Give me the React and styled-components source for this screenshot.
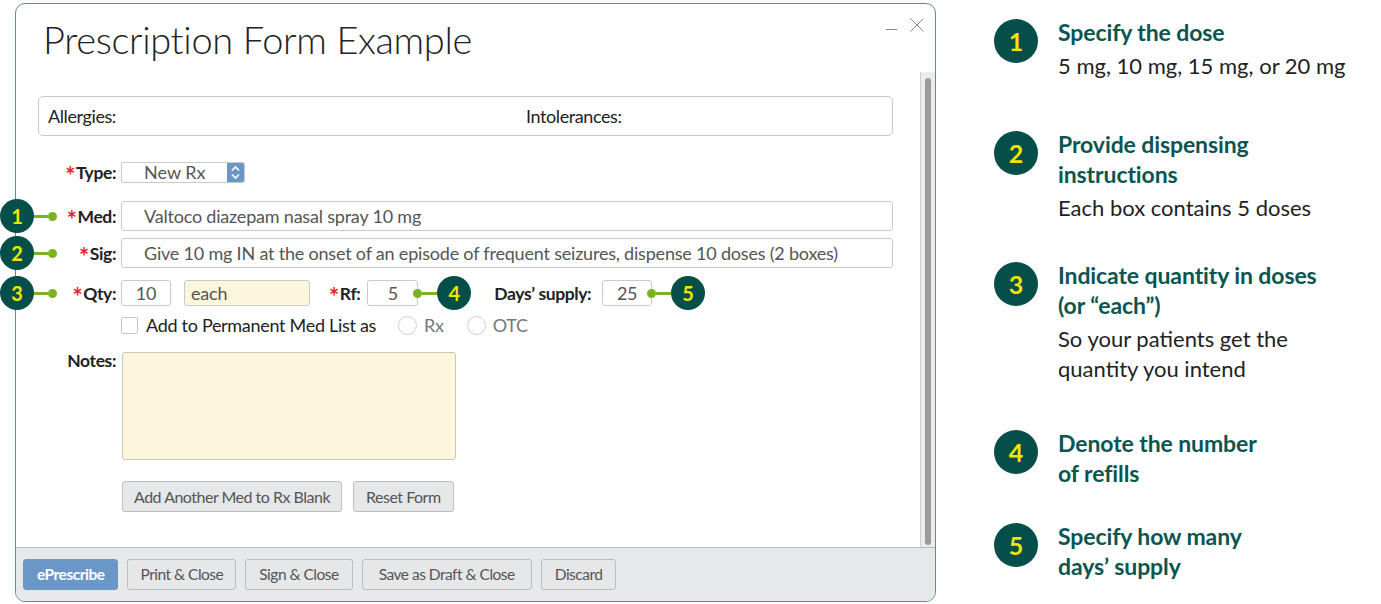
import React from 'react';
import styled, { createGlobalStyle } from 'styled-components';

const GlobalStyle = createGlobalStyle`
  html, body {
    margin: 0;
    padding: 0;
    background: #fff;
  }
  body {
    font-family: Lato, "Open Sans", Arial, sans-serif;
    color: #222;
  }
`;

const Page = styled.div`
  display: flex;
  width: 1381px;
  height: 604px;
  overflow: hidden;
`;

const FormSide = styled.div`
  padding: 3px 0 0 15px;
`;

const Window = styled.div`
  position: relative;
  width: 919px;
  height: 597px;
  border: 1px solid #5b8f96;
  border-radius: 10px;
  display: flex;
  flex-direction: column;
  background: #fff;
`;

const TitleBar = styled.div`
  height: 68px;
  display: flex;
  align-items: center;
  justify-content: space-between;
  padding: 0 10px 0 27px;
`;

const Title = styled.h1`
  margin: 0;
  font-family: Lato, sans-serif;
  font-weight: 300;
  font-size: 38px;
  color: #222;
  letter-spacing: -0.35px;
  padding-top: 2px;
`;

const WinControls = styled.div`
  display: flex;
  gap: 10px;
  align-self: flex-start;
  margin-top: 13px;
`;

const Body = styled.div`
  flex: 1;
  display: flex;
  min-height: 0;
`;

const Content = styled.div`
  flex: 1;
  padding: 24px 27px 0 22px;
`;

const ScrollTrack = styled.div`
  width: 14px;
  background: #ececec;
  border-left: 1px solid #cfcfcf;
  padding: 6px 0 2px;
  display: flex;
  justify-content: center;
`;

const ScrollThumb = styled.div`
  width: 6px;
  height: 100%;
  background: #9b9b9d;
  border-radius: 3px;
`;

const InfoBox = styled.div`
  height: 38px;
  border: 1px solid #c8c8c8;
  border-radius: 5px;
  display: flex;
  align-items: center;
  padding: 0 9px;
  font-size: 18px;
  letter-spacing: -0.4px;
  color: #222;
`;

const InfoItem = styled.span`
  width: ${p => p.w || 'auto'};
`;

const Row = styled.div`
  position: relative;
  display: flex;
  align-items: ${p => p.top ? 'flex-start' : 'center'};
  margin-top: ${p => p.mt}px;
`;

const Label = styled.label`
  width: 78px;
  flex: none;
  text-align: right;
  font-weight: 700;
  font-size: 17.5px;
  letter-spacing: -0.4px;
  color: #222;
  margin-right: ${p => p.mr ?? 5}px;
  margin-top: ${p => p.mtop || 0}px;
`;

const Star = styled.span`
  color: #e3262b;
  font-size: 24px;
  line-height: 0;
  position: relative;
  top: 6px;
  margin-right: 1px;
`;

const InlineLabel = styled.label`
  font-weight: 700;
  font-size: 17.5px;
  letter-spacing: -0.4px;
  color: #222;
  margin: 0 ${p => p.mr || 8}px 0 ${p => p.ml || 0}px;
`;

const Field = styled.div`
  box-sizing: border-box;
  width: ${p => p.w ? `${p.w}px` : 'auto'};
  flex: ${p => p.w ? 'none' : 1};
  height: ${p => p.h}px;
  border: 1px solid #c9c9c9;
  border-radius: 3px;
  background: ${p => p.yellow ? '#fdf6dc' : '#fff'};
  display: flex;
  align-items: center;
  justify-content: ${p => p.center ? 'center' : 'flex-start'};
  padding-left: ${p => p.center ? 0 : (p.pl ?? 22)}px;
  font-size: 18px;
  letter-spacing: -0.2px;
  color: #555;
  margin-left: ${p => p.ml || 0}px;
  white-space: nowrap;
`;

const Select = styled.div`
  box-sizing: border-box;
  width: 124px;
  height: 21px;
  border: 1px solid #c9c9c9;
  border-radius: 2px;
  display: flex;
  align-items: stretch;
  font-size: 18px;
  color: #555;
`;

const SelectText = styled.span`
  flex: 1;
  padding-left: 22px;
  line-height: 19px;
`;

const Spinner = styled.span`
  width: 17px;
  background: #6b97c7;
  display: flex;
  align-items: center;
  justify-content: center;
  border-radius: 0 2px 2px 0;
`;

const CheckBox = styled.span`
  box-sizing: border-box;
  width: 17px;
  height: 17px;
  border: 1px solid #c4c4c4;
  border-radius: 2px;
  margin-right: 8px;
`;

const Radio = styled.span`
  box-sizing: border-box;
  width: 19px;
  height: 19px;
  border: 1px solid #cfcfcf;
  border-radius: 50%;
  margin: 0 7px 0 ${p => p.ml}px;
`;

const PlainText = styled.span`
  font-size: 18px;
  letter-spacing: -0.3px;
  color: ${p => p.muted ? '#777' : '#222'};
`;

const NotesArea = styled.div`
  box-sizing: border-box;
  width: 334px;
  height: 108px;
  background: #fdf6dc;
  border: 1px solid #cbc6b4;
  border-radius: 3px;
`;

const ButtonRow = styled.div`
  display: flex;
  gap: 11px;
  margin: 21px 0 0 84px;
`;

const Button = styled.button`
  box-sizing: border-box;
  height: ${p => p.h || 31}px;
  padding: 0 ${p => p.px || 11}px;
  border: 1px solid ${p => p.primary ? '#6b97c7' : '#bdbdbd'};
  border-radius: 3px;
  background: ${p => p.primary ? '#6b97c7' : '#e6e7e9'};
  color: ${p => p.primary ? '#fff' : '#555'};
  font-family: Lato, sans-serif;
  font-weight: ${p => p.primary ? 700 : 400};
  font-size: ${p => p.fs || 15.5}px;
  letter-spacing: -0.5px;
  cursor: pointer;
`;

const Footer = styled.div`
  height: 52px;
  border-top: 1px solid #b9b9b9;
  background: #e7e8ea;
  border-radius: 0 0 9px 9px;
  display: flex;
  align-items: center;
  gap: 9px;
  padding: 0 0 1px 7px;
`;

/* callout markers */

const Circle = styled.span`
  flex: none;
  width: ${p => p.size}px;
  height: ${p => p.size}px;
  border-radius: 50%;
  background: #054e4a;
  color: #f4e400;
  font-family: Lato, sans-serif;
  font-weight: 700;
  font-size: ${p => p.fs}px;
  display: flex;
  align-items: center;
  justify-content: center;
`;

const Connector = styled.span`
  width: ${p => p.len}px;
  height: 3px;
  background: #7bb31f;
`;

const Dot = styled.span`
  width: 9px;
  height: 9px;
  border-radius: 50%;
  background: #7bb31f;
`;

const SideMarker = styled.div`
  position: absolute;
  left: -38px;
  top: 50%;
  transform: translateY(-50%);
  display: flex;
  align-items: center;
`;

const InlineMarker = styled.div`
  display: flex;
  align-items: center;
  margin: -6px ${p => p.mr}px -6px -5px;
`;

/* right-hand legend */

const Legend = styled.div`
  margin-left: 58px;
  padding-top: 17px;
  display: flex;
  flex-direction: column;
`;

const LegendItem = styled.div`
  display: flex;
  gap: 20px;
  margin-top: ${p => p.space}px;
`;

const LegendCircle = styled(Circle)`
  margin-top: 2px;
`;

const LegendTitle = styled.div`
  font-weight: 700;
  font-size: 23px;
  line-height: 30px;
  color: #0b5551;
  letter-spacing: -0.1px;
`;

const LegendText = styled.div`
  font-size: 22px;
  line-height: 30px;
  color: #222;
  margin-top: 4px;
`;

const Spin = () => (
  <svg width="11" height="17" viewBox="0 0 11 17">
    <path d="M2 6.5 L5.5 3 L9 6.5 M2 10.5 L5.5 14 L9 10.5" stroke="#fff" strokeWidth="1.7" fill="none" />
  </svg>
);

const MinIcon = () => (
  <svg width="14" height="14" viewBox="0 0 14 14">
    <path d="M1 12.5 H12" stroke="#8a8a8a" strokeWidth="1" />
  </svg>
);

const CloseIcon = () => (
  <svg width="16" height="16" viewBox="0 0 16 16">
    <path d="M1.5 1.5 L14.5 14.5 M14.5 1.5 L1.5 14.5" stroke="#8a8a8a" strokeWidth="1" />
  </svg>
);

const Callout = ({ n }) => (
  <SideMarker>
    <Circle size={34} fs={20}>{n}</Circle>
    <Connector len={14} />
    <Dot />
  </SideMarker>
);

const RightCallout = ({ n, mr }) => (
  <InlineMarker mr={mr}>
    <Dot />
    <Connector len={15} />
    <Circle size={34} fs={20}>{n}</Circle>
  </InlineMarker>
);

const legend = [
  { n: 1, space: 0, title: ['Specify the dose'], text: ['5 mg, 10 mg, 15 mg, or 20 mg'] },
  { n: 2, space: 48, title: ['Provide dispensing', 'instructions'], text: ['Each box contains 5 doses'] },
  { n: 3, space: 37, title: ['Indicate quantity in doses', '(or “each”)'], text: ['So your patients get the', 'quantity you intend'] },
  { n: 4, space: 44, title: ['Denote the number', 'of refills'], text: [] },
  { n: 5, space: 33, title: ['Specify how many', 'days’ supply'], text: [] },
];

const Lines = ({ lines }) => lines.map((l, i) => (
  <React.Fragment key={i}>{i > 0 && <br />}{l}</React.Fragment>
));

export default function App() {
  return (
    <>
      <GlobalStyle />
      <Page>
        <FormSide>
          <Window>
            <TitleBar>
              <Title>Prescription Form Example</Title>
              <WinControls>
                <MinIcon />
                <CloseIcon />
              </WinControls>
            </TitleBar>

            <Body>
              <Content>
                <InfoBox>
                  <InfoItem w="478px">Allergies:</InfoItem>
                  <InfoItem>Intolerances:</InfoItem>
                </InfoBox>

                <Row mt={26}>
                  <Label><Star>*</Star>Type:</Label>
                  <Select>
                    <SelectText>New Rx</SelectText>
                    <Spinner><Spin /></Spinner>
                  </Select>
                </Row>

                <Row mt={18}>
                  <Callout n={1} />
                  <Label><Star>*</Star>Med:</Label>
                  <Field h={30}>Valtoco diazepam nasal spray 10 mg</Field>
                </Row>

                <Row mt={7}>
                  <Callout n={2} />
                  <Label><Star>*</Star>Sig:</Label>
                  <Field h={30}>Give 10 mg IN at the onset of an episode of frequent seizures, dispense 10 doses (2 boxes)</Field>
                </Row>

                <Row mt={12}>
                  <Callout n={3} />
                  <Label><Star>*</Star>Qty:</Label>
                  <Field h={26} w={50} center>10</Field>
                  <Field h={26} w={126} ml={13} pl={6} yellow>each</Field>
                  <InlineLabel ml={19} mr={7}><Star>*</Star>Rf:</InlineLabel>
                  <Field h={26} w={51} center>5</Field>
                  <RightCallout n={4} mr={23} />
                  <InlineLabel mr={11}>Days’ supply:</InlineLabel>
                  <Field h={26} w={50} center>25</Field>
                  <RightCallout n={5} mr={0} />
                </Row>

                <Row mt={8}>
                  <Label />
                  <CheckBox />
                  <PlainText>Add to Permanent Med List as</PlainText>
                  <Radio ml={22} />
                  <PlainText muted>Rx</PlainText>
                  <Radio ml={23} />
                  <PlainText muted>OTC</PlainText>
                </Row>

                <Row mt={16} top>
                  <Label mtop={-2} mr={6}>Notes:</Label>
                  <NotesArea />
                </Row>

                <ButtonRow>
                  <Button fs={16}>Add Another Med to Rx Blank</Button>
                  <Button fs={16} px={12}>Reset Form</Button>
                </ButtonRow>
              </Content>
              <ScrollTrack>
                <ScrollThumb />
              </ScrollTrack>
            </Body>

            <Footer>
              <Button primary px={13}>ePrescribe</Button>
              <Button px={12}>Print &amp; Close</Button>
              <Button px={13}>Sign &amp; Close</Button>
              <Button px={16}>Save as Draft &amp; Close</Button>
              <Button px={13}>Discard</Button>
            </Footer>
          </Window>
        </FormSide>

        <Legend>
          {legend.map(item => (
            <LegendItem key={item.n} space={item.space}>
              <LegendCircle size={44} fs={25}>{item.n}</LegendCircle>
              <div>
                <LegendTitle><Lines lines={item.title} /></LegendTitle>
                {item.text.length > 0 && <LegendText><Lines lines={item.text} /></LegendText>}
              </div>
            </LegendItem>
          ))}
        </Legend>
      </Page>
    </>
  );
}
